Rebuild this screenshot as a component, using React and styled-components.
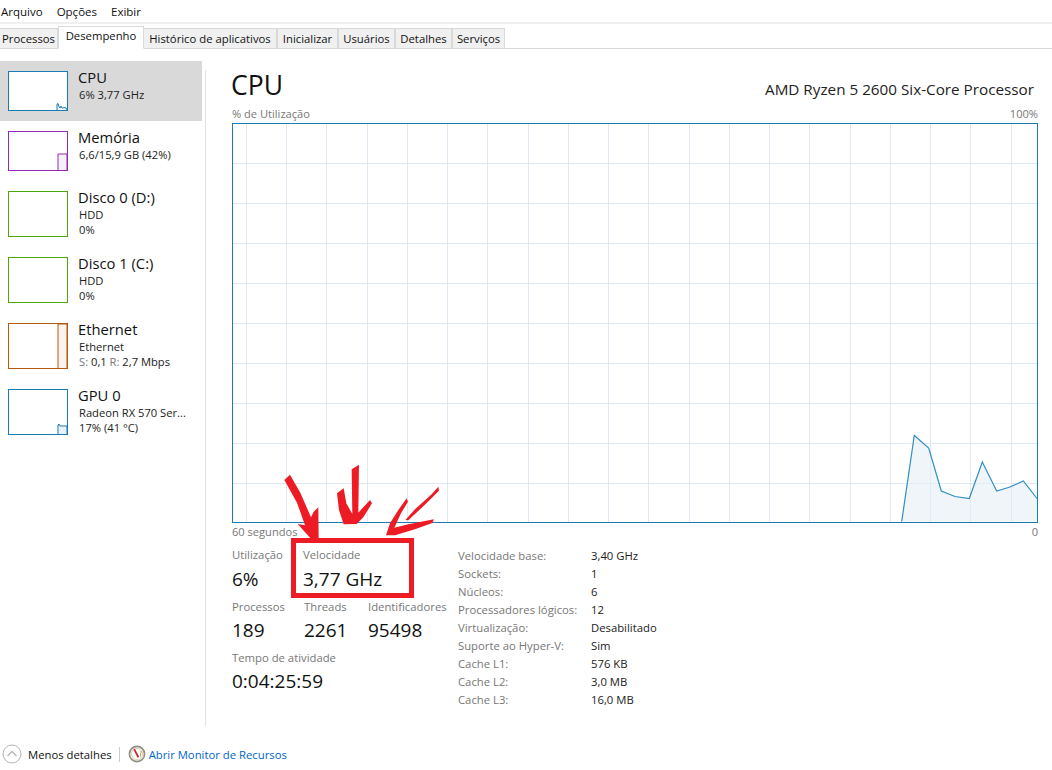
import React from "react";
import styled, { createGlobalStyle } from "styled-components";

const Global = createGlobalStyle`
  html, body { margin: 0; padding: 0; background: #fff; }
  body { font-family: "Open Sans", "Noto Sans", sans-serif; color: #111; overflow: hidden; }
`;
const Page = styled.div`
  position: relative; width: 1052px; height: 770px; display: flex; flex-direction: column; overflow: hidden;
`;
const MenuBar = styled.div`
  display: flex; gap: 14px; height: 22px; padding-left: 1px; align-items: center; font-size: 11.5px; border-bottom: 2px solid #f0f0f0;
`;
const MenuItem = styled.span``;
const TabBar = styled.div`
  display: flex; height: 22px; align-items: flex-end; border-bottom: 1px solid #d9d9d9; margin-top: 2px;
`;
const Tab = styled.div`
  box-sizing: border-box;
  width: ${p => p.$w}px;
  height: ${p => (p.$active ? "23px" : "20px")};
  padding-top: ${p => (p.$active ? "1px" : 0)};
  background: ${p => (p.$active ? "#fff" : "#f0f0f0")};
  border: 1px solid #d9d9d9;
  border-left-width: ${p => (p.$first || p.$afterActive ? 0 : 1)}px;
  border-bottom: ${p => (p.$active ? "1px solid #fff" : "none")};
  margin-bottom: ${p => (p.$active ? "-1px" : 0)};
  font-size: 11.3px;
  display: flex; justify-content: center; white-space: nowrap;
  align-items: ${p => (p.$active ? "flex-start" : "center")};
`;
const Body = styled.div`
  display: flex; flex: 1; min-height: 0; padding-top: 12px;
`;
const Sidebar = styled.div`
  width: 202px; display: flex; flex-direction: column;
`;
const SideItem = styled.div`
  display: flex; gap: 11px; padding: 10px 0 0 8px; box-sizing: border-box;
  height: ${p => p.$h}px;
  background: ${p => (p.$active ? "#d9d9d9" : "transparent")};
`;
const Thumb = styled.svg`
  display: block; flex: none;
`;
const SideText = styled.div`
  display: flex; flex-direction: column; font-size: 11.2px; line-height: 15px; color: #222;
`;
const SideTitle = styled.div`
  font-size: 14.75px; line-height: 20px; margin: -4px 0 0 -1px; color: #111;
`;
const Muted = styled.span`
  color: #777;
`;
const Divider = styled.div`
  width: 1px; height: 656px; margin: 9px 0 0 3px; background: #e2e2e2; flex: none;
`;
const Main = styled.div`
  flex: 1; padding: 0 14px 0 26px; display: flex; flex-direction: column; position: relative;
`;
const Header = styled.div`
  display: flex; justify-content: space-between; align-items: flex-start; height: 47px;
`;
const Title = styled.div`
  font-size: 26.5px; line-height: 32px; margin: 8px 0 0 -1px; color: #111;
`;
const Processor = styled.div`
  font-size: 15.25px; line-height: 20px; color: #222; margin: 18px 4px 0 0;
`;
const AxisRow = styled.div`
  display: flex; justify-content: space-between; font-size: 11.1px; line-height: 14px; color: #777; height: 15px;
  margin-top: ${p => p.$top}px;
`;
const Chart = styled.svg`
  display: block; margin-top: 1px; flex: none;
`;
const Stats = styled.div`
  display: flex; margin-top: 7px;
`;
const LeftStats = styled.div`
  width: 226px; display: flex; flex-direction: column; gap: 5.5px;
`;
const StatRow = styled.div`
  display: flex;
`;
const Stat = styled.div`
  width: ${p => p.$w}px; display: flex; flex-direction: column; flex: none;
`;
const StatLabel = styled.div`
  font-size: 11.3px; line-height: 16px; color: #777; white-space: nowrap;
`;
const StatValue = styled.div`
  font-size: 19px; line-height: 30px; color: #111;
  margin: ${p => (p.$low ? "1px 0 -1px" : 0)};
`;
const Specs = styled.div`
  display: grid; grid-template-columns: 133px auto; grid-auto-rows: 18px; font-size: 11.3px; align-items: center; margin-top: -1px;
`;
const SpecLabel = styled.div`
  color: #777; white-space: nowrap;
`;
const SpecValue = styled.div`
  color: #222;
`;
const Footer = styled.div`
  display: flex; align-items: center; height: 30px; padding-left: 2px; font-size: 11.3px; margin-bottom: 1px;
`;
const FooterText = styled.span`
  margin-left: 6px; color: #111;
`;
const FooterSep = styled.div`
  width: 1px; height: 15px; background: #ccc; margin: 0 8px 0 7px;
`;
const Link = styled.span`
  color: #0066cc; margin-left: 3px;
`;
const Annotation = styled.svg`
  position: absolute; left: 0; top: 0; pointer-events: none;
`;
const Box = styled.div`
  position: absolute; left: 291px; top: 538px; width: 123px; height: 60px; box-sizing: border-box; border: 5px solid #ed1c24;
`;

const Sparkline = ({ w, h, color, fill, pts }) => (
  <Thumb width={w} height={h} viewBox={`0 0 ${w} ${h}`}>
    <rect x="0.5" y="0.5" width={w - 1} height={h - 1} fill="#fff" stroke={color} />
    {pts && <polygon points={pts} fill={fill} stroke="none" />}
    {pts && <polyline points={pts} fill="none" stroke={color} strokeWidth="1" />}
  </Thumb>
);

const sideItems = [
  { title: "CPU", lines: ["6%  3,77 GHz"], color: "#1a7bb5", fill: "#f1f6fa", h: 60, ih: 40, active: true,
    pts: "49,39 49,33 50,32.5 51,35.5 52,37 53,35 54,37 55,37 56,36.5 58,37 59,39" },
  { title: "Memória", lines: ["6,6/15,9 GB (42%)"], color: "#9528b4", fill: "#f5f2f7", h: 60, ih: 40,
    pts: "50,39 50,23 59,23 59,39" },
  { title: "Disco 0 (D:)", lines: ["HDD", "0%"], color: "#4da60c", h: 66, ih: 46 },
  { title: "Disco 1 (C:)", lines: ["HDD", "0%"], color: "#4da60c", h: 66, ih: 46 },
  { title: "Ethernet", lines: ["Ethernet", <React.Fragment key="n"><Muted>S:</Muted> 0,1 <Muted>R:</Muted> 2,7 Mbps</React.Fragment>], color: "#b4590f", fill: "#fbf4ee", h: 66, ih: 46,
    pts: "50,45 50,1 59,1 59,45" },
  { title: "GPU 0", lines: ["Radeon RX 570 Ser...", "17%  (41 °C)"], color: "#1a7bb5", fill: "#e9f2f9", h: 66, ih: 46,
    pts: "50,45 50,36 51,35 52,37 59,37 59,45" },
];

const verticals = Array.from({ length: 20 }, (_, i) => Math.round(13.75 + i * 40.25) + 0.5);
const horizontals = Array.from({ length: 9 }, (_, i) => 40 + i * 40);
const line = "669.7,398.5 682.3,312.5 696.7,325 709.3,368 723,373.5 737.3,375.5 750.3,339 764.7,368 778,364 791.3,358 805,375.5";
const area = `${line} 805,398.5`;

export default function App() {
  return (
    <Page>
      <Global />
      <MenuBar>
        <MenuItem>Arquivo</MenuItem>
        <MenuItem>Opções</MenuItem>
        <MenuItem>Exibir</MenuItem>
      </MenuBar>
      <TabBar>
        <Tab $first $w={58}>Processos</Tab>
        <Tab $active $w={86}>Desempenho</Tab>
        <Tab $afterActive $w={133}>Histórico de aplicativos</Tab>
        <Tab $w={61}>Inicializar</Tab>
        <Tab $w={57}>Usuários</Tab>
        <Tab $w={57}>Detalhes</Tab>
        <Tab $w={53}>Serviços</Tab>
      </TabBar>
      <Body>
        <Sidebar>
          {sideItems.map(it => (
            <SideItem key={it.title} $h={it.h} $active={it.active}>
              <Sparkline w={60} h={it.ih} color={it.color} fill={it.fill} pts={it.pts} />
              <SideText>
                <SideTitle>{it.title}</SideTitle>
                {it.lines.map((l, i) => <div key={i}>{l}</div>)}
              </SideText>
            </SideItem>
          ))}
        </Sidebar>
        <Divider />
        <Main>
          <Header>
            <Title>CPU</Title>
            <Processor>AMD Ryzen 5 2600 Six-Core Processor</Processor>
          </Header>
          <AxisRow $top={-1}><span>% de Utilização</span><span>100%</span></AxisRow>
          <Chart width="806" height="400" viewBox="0 0 806 400">
            {verticals.map(x => <line key={x} x1={x} x2={x} y1="0" y2="400" stroke="#dfe9f2" strokeWidth="1" />)}
            {horizontals.map(y => <line key={y} x1="0" x2="806" y1={y + 0.5} y2={y + 0.5} stroke="#dfe9f2" strokeWidth="1" />)}
            <polygon points={area} fill="#e6eff7" fillOpacity="0.6" />
            <polyline points={line} fill="none" stroke="#2f8fc4" strokeWidth="1.2" />
            <rect x="0.5" y="0.5" width="805" height="399" fill="none" stroke="#1a7bb5" />
          </Chart>
          <AxisRow $top={2}><span>60 segundos</span><span>0</span></AxisRow>
          <Stats>
            <LeftStats>
              <StatRow>
                <Stat $w={71}><StatLabel>Utilização</StatLabel><StatValue $low>6%</StatValue></Stat>
                <Stat $w={120}><StatLabel>Velocidade</StatLabel><StatValue $low>3,77 GHz</StatValue></Stat>
              </StatRow>
              <StatRow>
                <Stat $w={72}><StatLabel>Processos</StatLabel><StatValue>189</StatValue></Stat>
                <Stat $w={64}><StatLabel>Threads</StatLabel><StatValue>2261</StatValue></Stat>
                <Stat $w={90}><StatLabel>Identificadores</StatLabel><StatValue>95498</StatValue></Stat>
              </StatRow>
              <Stat $w={150}><StatLabel>Tempo de atividade</StatLabel><StatValue>0:04:25:59</StatValue></Stat>
            </LeftStats>
            <Specs>
              <SpecLabel>Velocidade base:</SpecLabel><SpecValue>3,40 GHz</SpecValue>
              <SpecLabel>Sockets:</SpecLabel><SpecValue>1</SpecValue>
              <SpecLabel>Núcleos:</SpecLabel><SpecValue>6</SpecValue>
              <SpecLabel>Processadores lógicos:</SpecLabel><SpecValue>12</SpecValue>
              <SpecLabel>Virtualização:</SpecLabel><SpecValue>Desabilitado</SpecValue>
              <SpecLabel>Suporte ao Hyper-V:</SpecLabel><SpecValue>Sim</SpecValue>
              <SpecLabel>Cache L1:</SpecLabel><SpecValue>576 KB</SpecValue>
              <SpecLabel>Cache L2:</SpecLabel><SpecValue>3,0 MB</SpecValue>
              <SpecLabel>Cache L3:</SpecLabel><SpecValue>16,0 MB</SpecValue>
            </Specs>
          </Stats>
        </Main>
      </Body>
      <Footer>
        <svg width="20" height="20" viewBox="0 0 20 20">
          <circle cx="10" cy="10" r="9" fill="#fff" stroke="#b5b5b5" />
          <path d="M5.5 12 L10 7.5 L14.5 12" fill="none" stroke="#b5b5b5" strokeWidth="1.3" />
        </svg>
        <FooterText>Menos detalhes</FooterText>
        <FooterSep />
        <svg width="18" height="18" viewBox="0 0 18 18">
          <circle cx="9" cy="9" r="7.6" fill="#f7f5ee" stroke="#8f8f82" strokeWidth="1.6" />
          <circle cx="9" cy="9" r="5.6" fill="#fff" stroke="#d8c8a8" strokeWidth="0.8" />
          <path d="M6.2 4.2 L10.4 12.4" stroke="#c8282a" strokeWidth="1.8" />
          <path d="M13.2 6 L12.4 11.6" stroke="#c8a060" strokeWidth="1" />
        </svg>
        <Link>Abrir Monitor de Recursos</Link>
      </Footer>
      <Box />
      <Annotation width="1052" height="770" viewBox="0 0 1052 770">
        <g fill="#ed1c24" transform="translate(275 460) scale(0.3333)">
          <polygon points="28,60 45,44 76,98 108,172 116,155 130,142 131,236 108,236 68,192 90,196 66,128" />
          <polygon points="230,28 252,14 250,158 285,120 291,130 265,172 245,192 206,193 192,150 186,100 206,85 214,130 232,162" />
          <polygon points="333,226 345,190 370,150 395,115 399,125 378,160 358,203 400,193 477,178 472,189 420,208 360,226" />
          <polygon points="391,180 420,148 470,103 490,80 492,92 452,132 400,181" />
        </g>
      </Annotation>
    </Page>
  );
}
